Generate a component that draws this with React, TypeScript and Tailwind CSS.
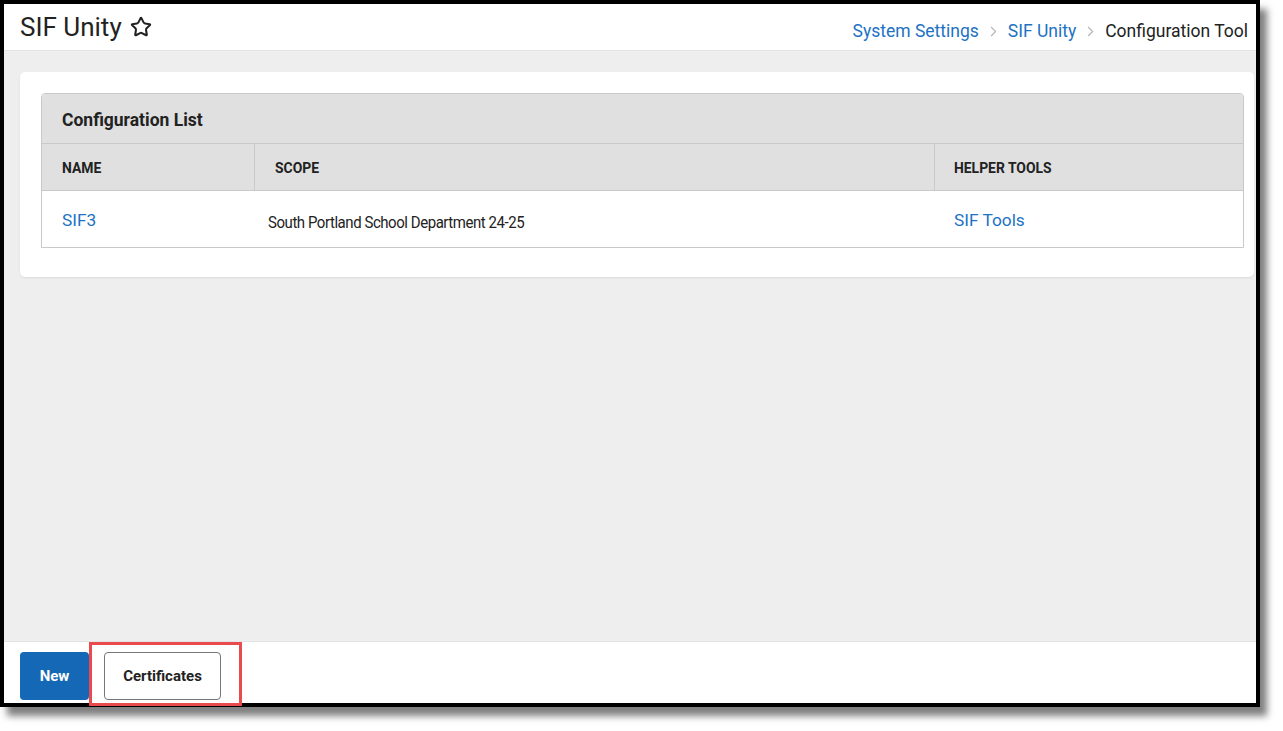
import { ChevronRight, Star } from 'lucide-react';

const font = { fontFamily: 'Roboto, "Liberation Sans", sans-serif' };

function Breadcrumb() {
  return (
    <nav className="flex items-center gap-[6px] pt-[8px] text-[17.5px] text-[#1d72c4]">
      <span>System Settings</span>
      <ChevronRight size={17} strokeWidth={1.5} className="text-[#b5b5b5]" />
      <span>SIF Unity</span>
      <ChevronRight size={17} strokeWidth={1.5} className="text-[#b5b5b5]" />
      <span className="text-[#222]">Configuration Tool</span>
    </nav>
  );
}

function ConfigTable() {
  return (
    <div className="border border-[#c9c9c9] rounded-t-[4px]">
      <div className="h-[50px] bg-[#e0e0e0] flex items-center px-[20px] pt-[3px] text-[17.5px] font-bold text-[#222] rounded-t-[4px] border-b border-[#c9c9c9]">
        Configuration List
      </div>
      <div className="grid grid-cols-[213px_680px_1fr]">
        <div className="h-[47px] bg-[#e0e0e0] border-b border-r border-[#c9c9c9] flex items-center px-[20px] pt-[3px] text-[13.9px] font-bold text-[#222]">NAME</div>
        <div className="h-[47px] bg-[#e0e0e0] border-b border-r border-[#c9c9c9] flex items-center px-[20px] pt-[3px] text-[13.9px] font-bold text-[#222]">SCOPE</div>
        <div className="h-[47px] bg-[#e0e0e0] border-b border-[#c9c9c9] flex items-center px-[19px] pt-[3px] text-[13.9px] font-bold text-[#222]">HELPER TOOLS</div>
        <div className="h-[56px] flex items-center px-[20px] pt-[4px] text-[17.3px] text-[#1d72c4]">SIF3</div>
        <div className="h-[56px] flex items-center px-[13px] pt-[6px] text-[15px] text-[#222] tracking-[-0.45px] scale-y-[1.08]">South Portland School Department 24-25</div>
        <div className="h-[56px] flex items-center px-[19px] pt-[4px] text-[17.3px] text-[#1d72c4]">SIF Tools</div>
      </div>
    </div>
  );
}

export default function App() {
  return (
    <div className="w-[1283px] h-[731px] bg-white relative" style={font}>
      <div className="w-[1260px] h-[707px] border-4 border-black shadow-[7px_9px_7px_rgba(0,0,0,0.5)] flex flex-col bg-white">
        {/* Header */}
        <header className="h-[47px] shrink-0 border-b border-[#e3e3e3] flex items-center justify-between pl-[16px] pr-[8px]">
          <div className="flex items-center gap-[8px]">
            <h1 className="text-[26px] text-[#222] leading-none">SIF Unity</h1>
            <Star size={22} strokeWidth={2.2} className="text-[#222]" />
          </div>
          <Breadcrumb />
        </header>

        {/* Body */}
        <main className="flex-1 bg-[#eeeeee] pl-[16px] pr-[2px] pt-[21px]">
          <div className="bg-white rounded-[5px] shadow-[0_1px_2px_rgba(0,0,0,0.08)] p-[21px] pr-[10px] pb-[29px]">
            <ConfigTable />
          </div>
        </main>

        {/* Footer */}
        <footer className="h-[62px] shrink-0 border-t border-[#e3e3e3] flex items-start gap-[15px] pl-[16px] pt-[10px]">
          <button className="w-[69px] h-[48px] rounded-[4px] bg-[#1568b5] text-white text-[15px] font-bold">New</button>
          <button className="w-[117px] h-[48px] rounded-[4px] bg-white border border-[#777] text-[#222] text-[15px] font-bold">Certificates</button>
        </footer>
      </div>

      {/* Annotation highlight */}
      <div className="absolute left-[89px] top-[642px] w-[153px] h-[64px] border-[3px] border-[#e84a4d]" />
    </div>
  );
}
